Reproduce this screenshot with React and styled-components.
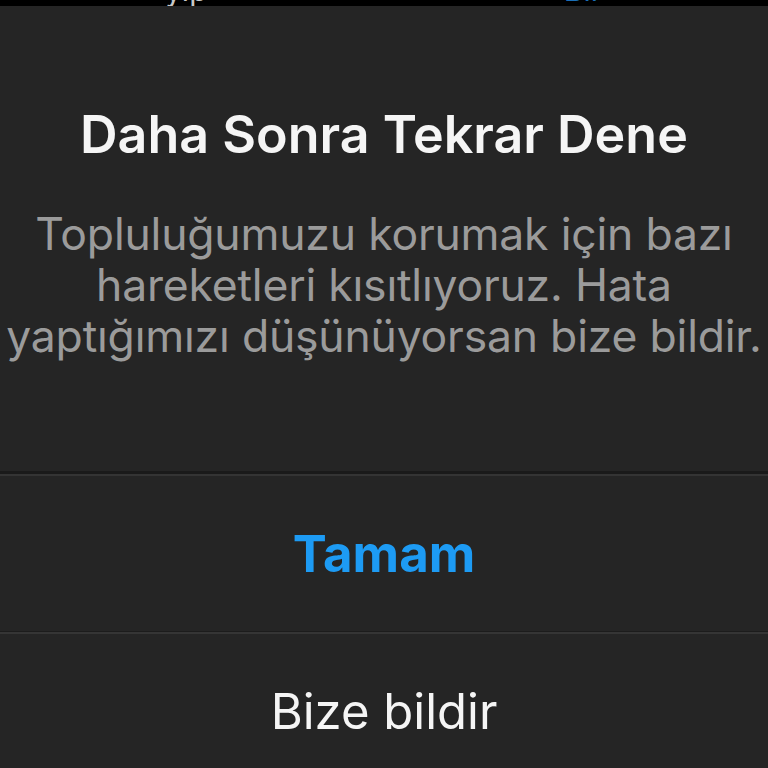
import styled, { createGlobalStyle } from "styled-components";

const GlobalStyle = createGlobalStyle`
  html, body {
    margin: 0;
    padding: 0;
    background: #252525;
  }
  body {
    font-family: Inter, "Noto Sans", sans-serif;
    -webkit-font-smoothing: antialiased;
  }
`;

const App = () => (
  <>
    <GlobalStyle />
    <Screen>
      <TopStrip>
        <StripText>yip</StripText>
        <StripText right>Bil</StripText>
      </TopStrip>
      <Content>
        <Title>Daha Sonra Tekrar Dene</Title>
        <Message>
          Topluluğumuzu korumak için bazı
          <br />
          hareketleri kısıtlıyoruz. Hata
          <br />
          yaptığımızı düşünüyorsan bize bildir.
        </Message>
      </Content>
      <Action primary>Tamam</Action>
      <Action>Bize bildir</Action>
    </Screen>
  </>
);

const Screen = styled.div`
  width: 768px;
  height: 768px;
  overflow: hidden;
  display: flex;
  flex-direction: column;
  background: #252525;
`;

const TopStrip = styled.div`
  height: 6px;
  flex-shrink: 0;
  background: #000;
  overflow: hidden;
  display: flex;
  justify-content: space-between;
  padding: 0 170px 0 165px;
`;

const StripText = styled.span`
  font-size: 30px;
  line-height: 30px;
  margin-top: -25px;
  color: ${(p) => (p.right ? "#1a6fb8" : "#c8c8c8")};
`;

const Content = styled.div`
  height: 468px;
  flex-shrink: 0;
  display: flex;
  flex-direction: column;
  align-items: center;
  box-sizing: border-box;
  padding-top: 99px;
  border-bottom: 3px solid #1a1a1a;
  box-shadow: 0 2px 0 #343434;
`;

const Title = styled.div`
  color: #f5f5f5;
  font-size: 52px;
  font-weight: 600;
  letter-spacing: 0;
  line-height: 60px;
  margin-bottom: 44px;
  white-space: nowrap;
`;

const Message = styled.div`
  color: #9b9b9b;
  font-size: 44.5px;
  line-height: 51px;
  letter-spacing: -0.2px;
  text-align: center;
  white-space: nowrap;
`;

const Action = styled.div`
  height: 155px;
  flex-shrink: 0;
  display: flex;
  align-items: center;
  justify-content: center;
  font-size: ${(p) => (p.primary ? "51px" : "49px")};
  font-weight: ${(p) => (p.primary ? 700 : 400)};
  color: ${(p) => (p.primary ? "#1d9bf4" : "#f5f5f5")};
  border-bottom: ${(p) => (p.primary ? "1px solid #1c1c1c" : "none")};
  box-shadow: ${(p) => (p.primary ? "0 2px 0 #353535" : "none")};
  margin-top: 2px;
`;

export default App;
